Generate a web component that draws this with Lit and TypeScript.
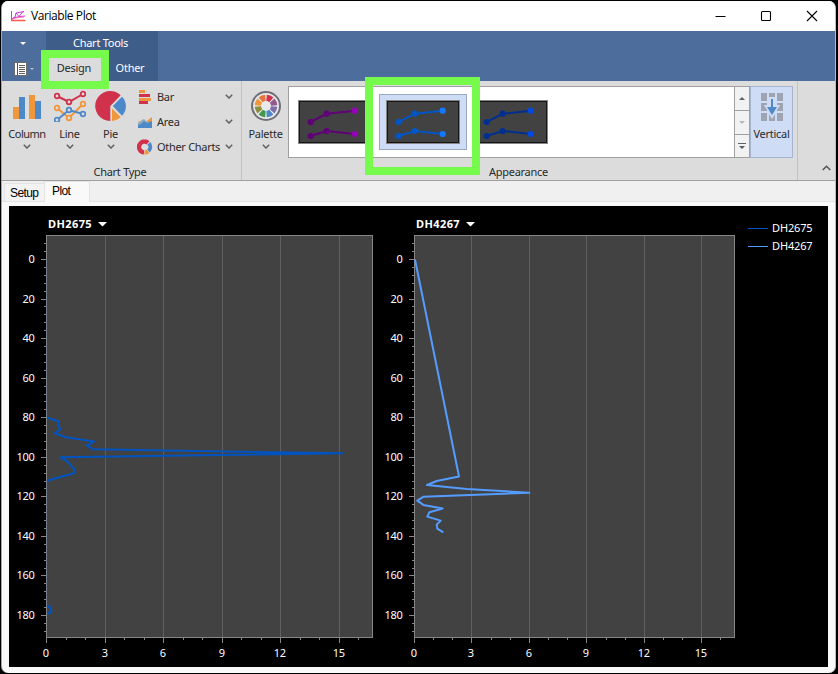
import { LitElement, html, svg, css } from "lit";
import { customElement, property } from "lit/decorators.js";

type Pt = [number, number];

/** One depth plot: vertical depth axis, horizontal value axis, polyline. */
@customElement("depth-plot")
class DepthPlot extends LitElement {
  @property() name = "";
  @property() stroke = "#0054c2";
  @property({ type: Number }) plotWidth = 326;
  @property({ type: Number }) unit = 19.53;
  @property({ attribute: false }) lines: { pts: Pt[]; width: number; opacity?: number }[] = [];

  static styles = css`
    :host { display: flex; flex-direction: column; width: 368px; }
    .name { display: flex; align-items: center; gap: 6px; height: 18px; margin: 9px 0 2px 39px; color: #fff;
      font: bold 11px/18px "Noto Sans", sans-serif; letter-spacing: 0.4px; }
    .plot { display: block; }
    .num { font: 11px "Noto Sans", sans-serif; fill: #fff; }
  `;

  render() {
    const W = this.plotWidth, top = 0.5, bottom = 402.5, left = 37.5, zero = 24.5, step = 1.978;
    const depths = Array.from({ length: 50 }, (_, i) => -8 + i * 4).filter((d) => d <= 188);
    const values = Array.from({ length: 18 }, (_, i) => i).filter((v) => v * this.unit <= W);
    const sx = (v: number) => Math.round(v * this.unit) + left;
    const sy = (d: number) => Math.round(d * step) + zero;
    return html`
      <div class="name"><span>${this.name}</span>
        <svg width="9" height="5" viewBox="0 0 9 5"><path d="M0 0H9L4.5 4.6Z" fill="#fff" /></svg></div>
      <svg class="plot" width="368" height="426" viewBox="0 0 368 426">
        <rect x=${left} y=${top} width=${W} height=${bottom - top} fill="#424242" />
        ${values.filter((v) => v % 3 === 0 && v > 0).map((v) => svg`<path d="M${sx(v)} ${top}V${bottom}" stroke="#606060" />`)}
        <rect x=${left} y=${top} width=${W} height=${bottom - top} fill="none" stroke="#868686" />
        ${depths.map((d) => svg`<path d="M${d % 20 === 0 ? 32 : 35} ${sy(d)}H37" stroke="#868686" />`)}
        ${values.map((v) => svg`<path d="M${sx(v)} 403V${v % 3 === 0 ? 408 : 405}" stroke="#868686" />`)}
        ${depths.filter((d) => d >= 0 && d % 20 === 0).map((d) => svg`<text class="num" x="25.5" y=${sy(d) + 3.5} text-anchor="end">${d}</text>`)}
        ${values.filter((v) => v % 3 === 0).map((v) => svg`<text class="num" x=${sx(v) - 0.8} y="422" text-anchor="middle">${v}</text>`)}
        ${this.lines.map((l) => svg`<polyline points=${l.pts.map((p) => p.join(",")).join(" ")} fill="none"
          stroke=${this.stroke} stroke-width=${l.width} stroke-linejoin="round" opacity=${l.opacity ?? 1} />`)}
      </svg>`;
  }
}

const seriesA = [
  { pts: [[38.3, 24], [38.3, 183]] as Pt[], width: 0.8, opacity: 0.8 },
  { pts: [[38.3, 245], [38.3, 371]] as Pt[], width: 0.8, opacity: 0.8 },
  { width: 2, pts: [[38, 182.7], [49.7, 186.3], [49.3, 190], [51.3, 194.3], [46, 198.3], [57, 202.3], [85, 206.6],
    [77.7, 210.3], [84.3, 214.3], [333.7, 218.3], [51.7, 222.3], [58.3, 226.3], [65, 234], [65, 238.3], [51, 242], [38, 245.7]] as Pt[] },
  { width: 2, pts: [[38, 371], [41, 371.7], [42.3, 377], [38, 378.7]] as Pt[] },
];
const seriesB = [
  { width: 2, pts: [[38, 24.5], [82, 241.5], [59.7, 246], [50, 250], [89.7, 254], [152.3, 257.7], [46.3, 261.8], [40.3, 265.6],
    [46.3, 269.9], [65.7, 273.6], [52.3, 277.3], [50.3, 281.6], [63.7, 285.6], [59.7, 289.6], [60.3, 293.6], [66.3, 297.3]] as Pt[] },
];

const chevron = html`<svg width="8" height="5" viewBox="0 0 8 5"><path d="M.8 .8L4 4L7.2 .8" fill="none" stroke="#606060" stroke-width="1.5" /></svg>`;

const columnIcon = html`<svg width="32" height="32" viewBox="0 0 32 32">
  <path d="M2 17H8V29H2ZM18 5H24V29H18Z" fill="#f0973c" /><path d="M8 7H14V29H8ZM24 11H30V29H24Z" fill="#4d89c8" /></svg>`;

const dots = (pts: Pt[], c: string) => svg`<polyline points=${pts.join(" ")} fill="none" stroke=${c} stroke-width="2" />
  ${pts.map((p) => svg`<circle cx=${p[0]} cy=${p[1]} r="2.3" fill="#dcdcdc" stroke=${c} stroke-width="1.8" />`)}`;
const lineIcon = html`<svg width="32" height="32" viewBox="0 0 32 32">
  ${dots([[3, 6], [15, 12], [29, 4]], "#d0314b")}${dots([[3, 18], [15, 28], [29, 14]], "#f0973c")}${dots([[3, 30], [15, 20], [29, 24]], "#4d89c8")}</svg>`;

const pieIcon = html`<svg width="32" height="32" viewBox="0 0 32 32">
  <path d="M15.3 16V31A15 15 0 1 1 25.7 5.3Z" fill="#d0314b" />
  <path d="M17.8 16L27 6.8A13.5 13.5 0 0 1 27 25.8Z" fill="#4d89c8" />
  <path d="M17 18.5L25.7 27A14 14 0 0 1 17 31Z" fill="#f0973c" /></svg>`;

const barIcon = html`<svg width="16" height="16" viewBox="0 0 16 16"><path d="M2 1H8V4H2ZM2 9H14V12H2Z" fill="#f0973c" />
  <path d="M2 5H13V8H2ZM2 12H11V15H2Z" fill="#d0314b" /></svg>`;
const areaIcon = html`<svg width="16" height="16" viewBox="0 0 16 16"><path d="M1 7L7 9L15 3V9L9 9L4 12Z" fill="#f0973c" />
  <path d="M1 9L5 6L7 5L9 7L15 9V13H1Z" fill="#8faac0" /><path d="M1 11L4 10L7 7L10 9L15 7V14H1Z" fill="#4d89c8" /></svg>`;

const arc = (cx: number, cy: number, r0: number, r1: number, a: number, b: number) => {
  const p = (r: number, t: number) => `${(cx + r * Math.sin((t * Math.PI) / 180)).toFixed(2)} ${(cy - r * Math.cos((t * Math.PI) / 180)).toFixed(2)}`;
  const big = b - a > 180 ? 1 : 0;
  return `M${p(r1, a)}A${r1} ${r1} 0 ${big} 1 ${p(r1, b)}L${p(r0, b)}A${r0} ${r0} 0 ${big} 0 ${p(r0, a)}Z`;
};
const donutIcon = html`<svg width="16" height="16" viewBox="0 0 16 16">
  <path d=${arc(7.5, 8, 3.3, 7.6, 185, 400)} fill="#d0314b" /><path d=${arc(8, 8, 3.3, 7.2, 47, 140)} fill="#4d89c8" />
  <path d=${arc(8, 8, 3.3, 7.6, 146, 185)} fill="#f0973c" /></svg>`;

const wheel = ["#d0314b", "#955a8c", "#7d70a8", "#4d89c8", "#3f9a4e", "#8c8f3c", "#f0973c", "#e8743c"];
const paletteIcon = html`<svg width="32" height="32" viewBox="0 0 32 32">
  <circle cx="16" cy="16" r="14" fill="#e9e9e9" stroke="#70707a" stroke-width="2" />
  ${wheel.map((c, i) => svg`<path d=${arc(16, 16, 5, 11.3, i * 45 + 4, i * 45 + 41)} fill=${c} />`)}</svg>`;

const verticalIcon = html`<svg width="24" height="30" viewBox="0 0 24 30">
  <path d="M1 1H7V9H1ZM9 1H15V5H9ZM17 1H23V9H17ZM1 11H7V13H4L7 18V19H1ZM23 11H17V13H20L17 18V19H23ZM1 21H7V29H1ZM17 21H23V29H17ZM9 22L12 27L15 22V29H9Z" fill="#9fa4b2" />
  <path d="M11 7H13V15H17L12 23L7 15H11Z" fill="#4d89c8" /></svg>`;

@customElement("app-root")
class AppRoot extends LitElement {
  static styles = css`
    :host { display: block; width: 838px; height: 674px; background: #000; overflow: hidden;
      font: 11px/16px "Noto Sans", sans-serif; letter-spacing: -0.27px; color: #2a2a2a; }
    * { box-sizing: border-box; }
    svg { display: block; flex: none; }
    .frame { padding: 1px 2px 1px 1px; height: 674px; }
    .window { position: relative; height: 672px; border-left: 1px solid #a7a7a7; border-right: 1px solid #b8bcc4;
      border-radius: 7px; background: #f9f9f9; overflow: hidden; display: flex; flex-direction: column; }
    .title { height: 30px; background: #fff; display: flex; align-items: center; padding: 0 17px 0 8px; color: #000; }
    .caption { flex: 1; margin-left: 5px; font: 12px/16px "Open Sans", sans-serif; letter-spacing: -0.42px; }
    .controls { display: flex; gap: 34px; }
    .head { height: 50px; background: #4d6d9c; display: grid; grid-template-columns: 44px 112px 1fr; color: #fff; }
    .quick { display: flex; flex-direction: column; }
    .drop { height: 25px; display: grid; place-items: center; padding-right: 2px; }
    .file { display: flex; align-items: center; gap: 3px; padding: 0 0 0 12px; height: 25px; }
    .context { background: #3f5d89; }
    .ctxname { height: 25px; line-height: 24px; padding-left: 27px; }
    .tabs { display: flex; height: 25px; line-height: 24px; }
    .tab { width: 56px; text-align: center; }
    .tab.on { background: #dcdcdc; color: #2a2a2a; }
    .ribbon { height: 100px; background: #dcdcdc; border-bottom: 1px solid #a0a0a0; display: flex; }
    .group { display: flex; flex-direction: column; border-right: 1px solid #c2c2c2; }
    .body { display: flex; height: 83px; }
    .gname { text-align: center; line-height: 15px; height: 16px; }
    .types { width: 240px; }
    .types .gname { padding-right: 3px; }
    .looks { width: 556px; }
    .looks .gname { padding-right: 2px; }
    .big { width: 42px; display: flex; flex-direction: column; align-items: center; padding-top: 9px; }
    .big .lbl { margin-top: 4px; height: 18px; line-height: 16px; }
    .big.col { margin-left: 4px; }
    .big.col .lbl { letter-spacing: -0.5px; }
    .big.pie { padding-right: 1px; }
    .big.next { padding-left: 1px; }
    .big.pal { width: 45px; padding-left: 2px; }
    .list { padding: 3px 0 0 5px; width: 101px; }
    .item { height: 25px; display: flex; align-items: center; gap: 4px; white-space: nowrap; }
    .item .lbl { width: 66px; letter-spacing: -0.3px; }
    .gallery { display: flex; width: 447px; height: 72px; margin: 5px 0 0 1px; background: #fff; border: 1px solid #a0a0a0; padding: 7px 2px; }
    .style { width: 88px; height: 56px; padding: 5px 6px; border: 1px solid transparent; flex: none; }
    .style.on { background: #cfdcf5; border-color: #9aa9c0; }
    .scroll { width: 15px; height: 72px; margin-top: 5px; border: 1px solid #a0a0a0; border-left: 0; display: grid; grid-template-rows: 24px 24px 22px; background: #f2f2f2; }
    .scroll div { display: grid; place-items: center; border-bottom: 1px solid #a0a0a0; }
    .scroll div:last-child { border: 0; }
    .vert { width: 43px; height: 72px; margin-top: 5px; background: #cfdcf5; border: 1px solid #a6b6d2; display: flex; flex-direction: column; align-items: center; padding-top: 5px; gap: 4px; }
    .collapse { flex: 1; display: flex; align-items: flex-end; justify-content: flex-end; padding: 0 4px 9px 0; }
    .pages { height: 21px; background: #f0f0f0; border-bottom: 1px solid #e3e3e3; display: flex; align-items: flex-end; padding-left: 2px; flex: none;
      color: #000; font-family: "Liberation Sans", sans-serif; font-size: 12px; letter-spacing: -0.6px; }
    .page { width: 40px; height: 18px; border: 1px solid #e3e3e3; border-right: 0; border-bottom: 0; background: #f3f3f3; line-height: 18px; padding-left: 5px; }
    .page.on { width: 46px; height: 21px; margin-bottom: -1px; border-right: 1px solid #e3e3e3; background: #f9f9f9; line-height: 18px; padding-left: 7px; }
    .canvas { width: 819px; height: 461px; margin: 4px 0 0 7px; background: #000; display: flex; }
    .legend { padding: 13px 0 0 3px; color: #fff; letter-spacing: -0.15px; }
    .key { display: flex; align-items: center; height: 18px; gap: 4px; }
    .mark { position: absolute; border: 8px solid #76fb4c; }
    .m1 { left: 39px; top: 49px; width: 68px; height: 39px; }
    .m2 { left: 363px; top: 76px; width: 115px; height: 98px; }
  `;

  private thumb(c: string, end: string, on = false) {
    const rows: Pt[][] = [[[12.7, 22], [28.7, 13.7], [56.7, 10.7]], [[12.7, 36], [28.7, 31], [56.7, 34]]];
    return html`<div class="style ${on ? "on" : ""}"><svg width="74" height="44" viewBox="0 0 74 44">
      <rect x=".5" y=".5" width="73" height="43" fill="#424242" stroke="#858585" />
      <rect x="1.5" y="1.5" width="71" height="41" fill="none" stroke="#161616" />
      ${rows.map((r) => svg`<polyline points=${r.join(" ")} fill="none" stroke=${c} stroke-width="2" />
        ${r.map((p, i) => svg`<circle cx=${p[0]} cy=${p[1]} r="3.1" fill=${i === 2 ? end : c} />`)}`)}
    </svg></div>`;
  }

  render() {
    const tri = (c: string, up = false) => html`<svg width="6" height="3" viewBox="0 0 6 3"><path d=${up ? "M0 3L3 0L6 3Z" : "M0 0H6L3 3Z"} fill=${c} /></svg>`;
    return html`<div class="frame"><div class="window">
      <div class="title">
        <svg width="16" height="12" viewBox="0 0 16 12" fill="none">
          <path d="M1.5 1V10.5" stroke="#7a62e8" /><path d="M1 10.5H15.5" stroke="#ff5a48" stroke-width="1.3" />
          <path d="M2 9L5 7L6 3L14 1.5M6 3L9 6.5L13 1.5M3 8L10 6.5L15 6" stroke="#c43cdc" /><path d="M2 10L5 8L14 7" stroke="#ff4da0" stroke-width=".7" /></svg>
        <span class="caption">Variable Plot</span>
        <div class="controls">
          <svg width="12" height="12" viewBox="0 0 12 12"><path d="M1.5 6.5H11.5" stroke="#000" /></svg>
          <svg width="12" height="12" viewBox="0 0 12 12"><rect x="1.5" y="1.5" width="9" height="9" rx="1" fill="none" stroke="#000" stroke-width="1.1" /></svg>
          <svg width="12" height="12" viewBox="0 0 12 12"><path d="M1 1L11 11M11 1L1 11" stroke="#000" stroke-width="1.1" /></svg>
        </div>
      </div>
      <div class="head">
        <div class="quick">
          <div class="drop">${tri("#fff")}</div>
          <div class="file"><svg width="13" height="14" viewBox="0 0 13 14"><rect x=".5" y=".5" width="12" height="13" fill="#fff" stroke="#6b6b6b" />
            <path d="M3.5 1V13" stroke="#555" /><path d="M5 3.5H11M5 5.5H11M5 7.5H11M5 9.5H11M5 11.5H11" stroke="#606060" /></svg>
            <svg width="4" height="2" viewBox="0 0 4 2"><path d="M0 0H4L2 2Z" fill="#c0c0c0" /></svg></div>
        </div>
        <div class="context"><div class="ctxname">Chart Tools</div>
          <div class="tabs"><div class="tab on">Design</div><div class="tab">Other</div></div></div>
      </div>
      <div class="ribbon">
        <div class="group types">
          <div class="body">
            <div class="big col">${columnIcon}<span class="lbl">Column</span>${chevron}</div>
            <div class="big next">${lineIcon}<span class="lbl">Line</span>${chevron}</div>
            <div class="big pie">${pieIcon}<span class="lbl">Pie</span>${chevron}</div>
            <div class="list">
              <div class="item">${barIcon}<span class="lbl">Bar</span>${chevron}</div>
              <div class="item">${areaIcon}<span class="lbl">Area</span>${chevron}</div>
              <div class="item">${donutIcon}<span class="lbl">Other Charts</span>${chevron}</div>
            </div>
          </div>
          <div class="gname">Chart Type</div>
        </div>
        <div class="group looks">
          <div class="body">
            <div class="big pal">${paletteIcon}<span class="lbl">Palette</span>${chevron}</div>
            <div class="gallery">
              ${this.thumb("#600078", "#9400b8")}${this.thumb("#0056c4", "#1478ff", true)}${this.thumb("#002f90", "#0048e0")}
            </div>
            <div class="scroll"><div>${tri("#606060", true)}</div><div>${tri("#b8b8b8")}</div>
              <div><svg width="8" height="6" viewBox="0 0 8 6"><path d="M0 0H8V1H0ZM1 3H7L4 6Z" fill="#606060" /></svg></div></div>
            <div class="vert">${verticalIcon}<span>Vertical</span></div>
          </div>
          <div class="gname">Appearance</div>
        </div>
        <div class="collapse"><svg width="9" height="6" viewBox="0 0 9 6"><path d="M.7 5L4.5 1.2L8.3 5" fill="none" stroke="#555" stroke-width="1.5" /></svg></div>
      </div>
      <div class="pages"><div class="page">Setup</div><div class="page on">Plot</div></div>
      <div class="canvas">
        <depth-plot name="DH2675" stroke="#0054c2" .lines=${seriesA}></depth-plot>
        <depth-plot name="DH4267" stroke="#559cff" .plotWidth=${320} .unit=${19.15} .lines=${seriesB}></depth-plot>
        <div class="legend">
          ${[["DH2675", "#0054c2"], ["DH4267", "#559cff"]].map(([n, c]) => html`<div class="key">
            <svg width="20" height="1" viewBox="0 0 20 1"><path d="M0 .5H20" stroke=${c} /></svg><span>${n}</span></div>`)}
        </div>
      </div>
      <div class="mark m1"></div><div class="mark m2"></div>
    </div></div>`;
  }
}
